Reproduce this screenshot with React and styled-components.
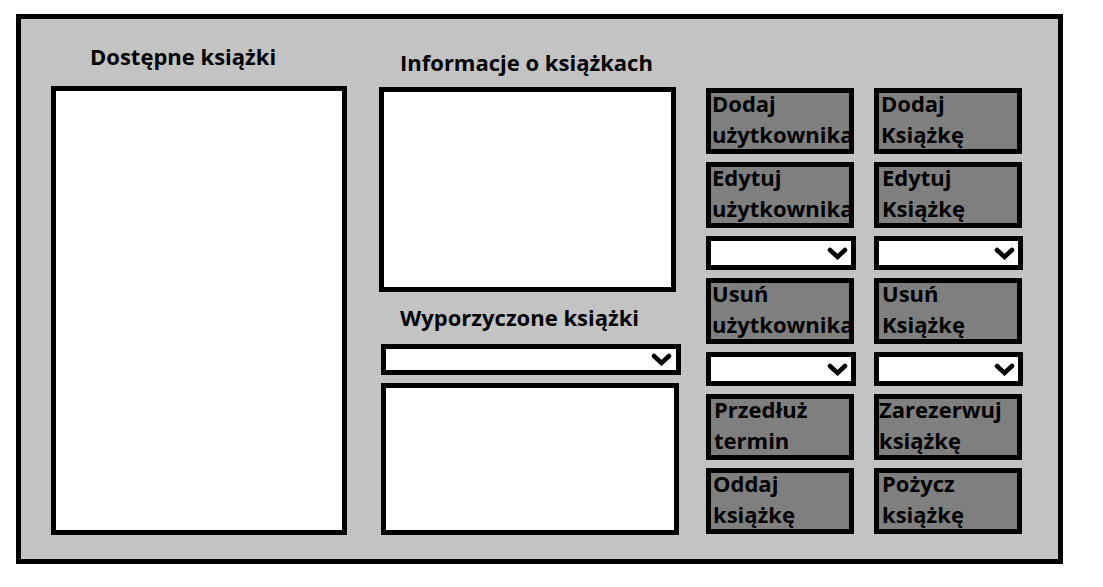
import React from "react";
import styled, { createGlobalStyle } from "styled-components";

const Global = createGlobalStyle`
  html, body { margin: 0; padding: 0; background: #ffffff; }
  body { font-family: "Open Sans", "Noto Sans", "DejaVu Sans", sans-serif; color: #000; }
`;

const Frame = styled.div`
  box-sizing: border-box;
  margin: 14px 0 0 16px;
  width: 1047px;
  height: 550px;
  border: 5px solid #000;
  background: #c3c3c3;
  display: flex;
  align-items: flex-start;
  padding-left: 30px;
`;

const Column = styled.section`
  display: flex;
  flex-direction: column;
  align-items: flex-start;
  width: ${(p) => p.$width}px;
  margin-left: ${(p) => p.$offset || 0}px;
  padding-top: ${(p) => p.$top}px;
`;

const Heading = styled.h2`
  margin: ${(p) => p.$mt || 0}px 0 0 0;
  padding-left: ${(p) => p.$indent}px;
  font-size: 22px;
  font-weight: 700;
  line-height: 30px;
  white-space: nowrap;
`;

const ListBox = styled.div`
  box-sizing: border-box;
  width: ${(p) => p.$w}px;
  height: ${(p) => p.$h}px;
  margin-top: ${(p) => p.$mt || 0}px;
  margin-left: ${(p) => p.$ml || 0}px;
  border: 5px solid #000;
  background: #fff;
`;

const SelectBox = styled.div`
  box-sizing: border-box;
  width: ${(p) => p.$w || 148}px;
  height: ${(p) => p.$h || 34}px;
  margin-top: ${(p) => p.$mt || 0}px;
  margin-left: ${(p) => p.$ml || 0}px;
  border: 5px solid #000;
  background: #fff;
  display: flex;
  align-items: center;
  justify-content: flex-end;
  padding-right: ${(p) => p.$pr || 3}px;
`;

const ActionGrid = styled.div`
  display: grid;
  grid-template-columns: 148px 148px;
  grid-template-rows: 66px 66px 34px 66px 34px 66px 66px;
  column-gap: 20px;
  row-gap: 8px;
  margin-left: 25px;
  padding-top: 69px;
`;

const ActionButton = styled.button`
  box-sizing: border-box;
  width: 148px;
  height: 66px;
  margin: 0;
  border: 5px solid #000;
  border-radius: 0;
  background: #7f7f7f;
  color: #000;
  font-family: inherit;
  font-size: 22px;
  font-weight: 700;
  line-height: 31px;
  text-align: left;
  padding: 0 0 0 ${(p) => p.$pad}px;
  overflow: hidden;
  display: flex;
  flex-direction: column;
  justify-content: flex-start;
  align-items: flex-start;
  white-space: nowrap;
`;

const Lines = styled.span`
  display: block;
  margin-top: -5px;
`;

const Line = styled.span`
  display: block;
`;

const Chevron = () => (
  <svg width="21" height="13" viewBox="0 0 21 13" aria-hidden="true">
    <polyline
      points="3,3 10.5,10 18,3"
      fill="none"
      stroke="#000"
      strokeWidth="4.5"
      strokeLinecap="round"
      strokeLinejoin="miter"
    />
  </svg>
);

const Select = (props) => (
  <SelectBox {...props}>
    <Chevron />
  </SelectBox>
);

const Action = ({ lines, pad }) => (
  <ActionButton $pad={pad}>
    <Lines>
      {lines.map((l) => (
        <Line key={l}>{l}</Line>
      ))}
    </Lines>
  </ActionButton>
);

export default function App() {
  return (
    <>
      <Global />
      <Frame>
        <Column $width={296} $top={22}>
          <Heading $indent={39}>Dostępne książki</Heading>
          <ListBox $w={296} $h={449} $mt={15} />
        </Column>

        <Column $width={302} $offset={32} $top={28}>
          <Heading $indent={21}>Informacje o książkach</Heading>
          <ListBox $w={297} $h={205} $mt={10} />
          <Heading $indent={21} $mt={10}>Wyporzyczone książki</Heading>
          <Select $w={300} $h={31} $ml={2} $mt={12} $pr={4} />
          <ListBox $w={298} $h={152} $ml={2} $mt={8} />
        </Column>

        <ActionGrid>
          <Action pad={1} lines={["Dodaj", "użytkownika"]} />
          <Action pad={2} lines={["Dodaj", "Książkę"]} />
          <Action pad={1} lines={["Edytuj", "użytkownika"]} />
          <Action pad={3} lines={["Edytuj", "Książkę"]} />
          <Select $w={150} />
          <Select $w={149} />
          <Action pad={1} lines={["Usuń", "użytkownika"]} />
          <Action pad={3} lines={["Usuń", "Książkę"]} />
          <Select $w={150} />
          <Select $w={149} />
          <Action pad={3} lines={["Przedłuż", "termin"]} />
          <Action pad={0} lines={["Zarezerwuj", "książkę"]} />
          <Action pad={2} lines={["Oddaj", "książkę"]} />
          <Action pad={3} lines={["Pożycz", "książkę"]} />
        </ActionGrid>
      </Frame>
    </>
  );
}
